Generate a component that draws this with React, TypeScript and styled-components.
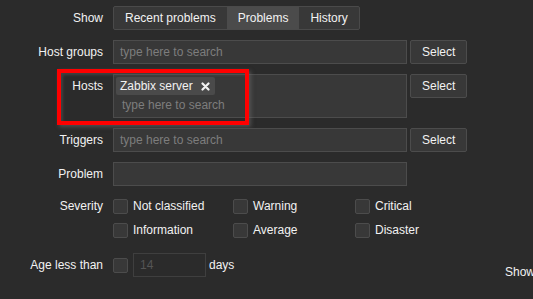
import styled, { createGlobalStyle } from "styled-components";

const GlobalStyle = createGlobalStyle`
  html, body {
    margin: 0;
    padding: 0;
    background: #2b2b2b;
    overflow: hidden;
  }
  body {
    font-family: "Liberation Sans", Arial, sans-serif;
    font-size: 12px;
    color: #f2f2f2;
  }
`;

const Page = styled.div`
  display: flex;
  width: 533px;
  height: 299px;
  overflow: hidden;
`;

const Form = styled.div`
  width: 505px;
  flex: none;
  padding-top: 6px;
`;

const SideColumn = styled.div`
  padding-top: 265px;
  white-space: nowrap;
`;

const Row = styled.div<{ $gap?: number }>`
  position: relative;
  display: flex;
  align-items: flex-start;
  margin-bottom: ${(p) => p.$gap ?? 10}px;
`;

const Label = styled.div<{ $lh?: number }>`
  width: 103px;
  flex: none;
  padding-right: 10px;
  text-align: right;
  line-height: ${(p) => p.$lh ?? 24}px;
  white-space: nowrap;
`;

const Tabs = styled.div`
  display: flex;
  height: 22px;
  border: 1px solid #4a4a4a;
  border-radius: 2px;
  background: #383838;
  overflow: hidden;
`;

const Tab = styled.div<{ $active?: boolean }>`
  padding: 0 11px;
  line-height: 22px;
  background: ${(p) => (p.$active ? "#4b4b4b" : "transparent")};
`;

const Input = styled.div<{ $width?: number; $disabled?: boolean }>`
  box-sizing: border-box;
  width: ${(p) => p.$width ?? 294}px;
  height: 24px;
  border: 1px solid ${(p) => (p.$disabled ? "#3f3f3f" : "#4c4c4c")};
  background: ${(p) => (p.$disabled ? "#2b2b2b" : "#383838")};
  padding-left: 6px;
  line-height: 22px;
  color: ${(p) => (p.$disabled ? "#555555" : "#7d7d7d")};
`;

const Multi = styled.div`
  box-sizing: border-box;
  width: 294px;
  height: 44px;
  border: 1px solid #4c4c4c;
  background: #383838;
  padding: 2px;
`;

const Chip = styled.div`
  display: inline-flex;
  align-items: center;
  height: 18px;
  padding: 0 5px 0 4px;
  gap: 8px;
  background: #4a4a4a;
  border-radius: 2px;
  color: #f2f2f2;
`;

const Placeholder = styled.div`
  padding-left: 6px;
  line-height: 21px;
  color: #7d7d7d;
`;

const Button = styled.div`
  box-sizing: border-box;
  margin-left: 3px;
  height: 24px;
  padding: 0 11px;
  border: 1px solid #4c4c4c;
  border-radius: 2px;
  background: #383838;
  line-height: 22px;
`;

const Highlight = styled.div`
  position: absolute;
  left: 57px;
  top: -5px;
  width: 192px;
  height: 56px;
  box-sizing: border-box;
  border: 4px solid #ff0000;
  box-shadow: 2px 2px 4px rgba(110, 110, 110, 0.55),
    inset 2px 2px 3px rgba(90, 90, 90, 0.5);
  pointer-events: none;
`;

const CheckGrid = styled.div`
  display: grid;
  grid-template-columns: 120px 122px 120px;
  row-gap: 9px;
`;

const Check = styled.div`
  display: flex;
  align-items: center;
  gap: 5px;
  line-height: 15px;
`;

const Box = styled.div`
  box-sizing: border-box;
  width: 15px;
  height: 15px;
  flex: none;
  border: 1px solid #4c4c4c;
  border-radius: 2px;
  background: #383838;
`;

const Inline = styled.div`
  display: flex;
  align-items: center;
  gap: 5px;
  height: 24px;
`;

const Remove = () => (
  <svg width="9" height="9" viewBox="0 0 9 9">
    <path d="M1.5 1.5 L7.5 7.5 M7.5 1.5 L1.5 7.5" stroke="#f2f2f2" strokeWidth="2.2" strokeLinecap="round" />
  </svg>
);

const severities = [
  "Not classified",
  "Warning",
  "Critical",
  "Information",
  "Average",
  "Disaster",
];

export default function App() {
  return (
    <>
      <GlobalStyle />
      <Page>
        <Form>
          <Row $gap={10}>
            <Label>Show</Label>
            <Tabs>
              <Tab>Recent problems</Tab>
              <Tab $active>Problems</Tab>
              <Tab>History</Tab>
            </Tabs>
          </Row>
          <Row>
            <Label>Host groups</Label>
            <Input>type here to search</Input>
            <Button>Select</Button>
          </Row>
          <Row>
            <Highlight />
            <Label>Hosts</Label>
            <Multi>
              <Chip>
                Zabbix server
                <Remove />
              </Chip>
              <Placeholder>type here to search</Placeholder>
            </Multi>
            <Button>Select</Button>
          </Row>
          <Row>
            <Label>Triggers</Label>
            <Input>type here to search</Input>
            <Button>Select</Button>
          </Row>
          <Row $gap={13}>
            <Label>Problem</Label>
            <Input />
          </Row>
          <Row $gap={15}>
            <Label $lh={15}>Severity</Label>
            <CheckGrid>
              {severities.map((s) => (
                <Check key={s}>
                  <Box />
                  {s}
                </Check>
              ))}
            </CheckGrid>
          </Row>
          <Row>
            <Label>Age less than</Label>
            <Inline>
              <Box />
              <Input $width={73} $disabled>
                14
              </Input>
              <span style={{ marginLeft: -2 }}>days</span>
            </Inline>
          </Row>
        </Form>
        <SideColumn>Show tags</SideColumn>
      </Page>
    </>
  );
}
